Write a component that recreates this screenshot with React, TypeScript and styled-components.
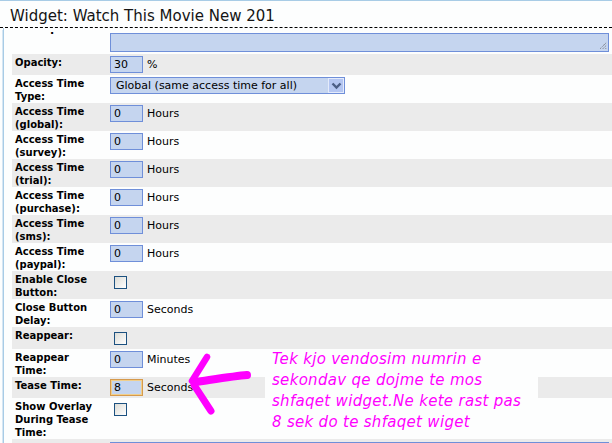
import React from 'react';
import styled, { createGlobalStyle } from 'styled-components';

const GlobalStyle = createGlobalStyle`
  html, body {
    margin: 0;
    padding: 0;
    height: 443px;
    overflow: hidden;
    background: #fdfefe;
  }
  body {
    font-family: "DejaVu Sans", Verdana, sans-serif;
    font-size: 11px;
    color: #000;
  }
`;

type Field = {
  label: string;
  kind: 'input' | 'check' | 'select';
  value?: string;
  unit?: string;
  focused?: boolean;
};

const fields: Field[] = [
  { label: 'Opacity:', kind: 'input', value: '30', unit: '%' },
  { label: 'Access Time Type:', kind: 'select', value: 'Global (same access time for all)' },
  { label: 'Access Time (global):', kind: 'input', value: '0', unit: 'Hours' },
  { label: 'Access Time (survey):', kind: 'input', value: '0', unit: 'Hours' },
  { label: 'Access Time (trial):', kind: 'input', value: '0', unit: 'Hours' },
  { label: 'Access Time (purchase):', kind: 'input', value: '0', unit: 'Hours' },
  { label: 'Access Time (sms):', kind: 'input', value: '0', unit: 'Hours' },
  { label: 'Access Time (paypal):', kind: 'input', value: '0', unit: 'Hours' },
  { label: 'Enable Close Button:', kind: 'check' },
  { label: 'Close Button Delay:', kind: 'input', value: '0', unit: 'Seconds' },
  { label: 'Reappear:', kind: 'check' },
  { label: 'Reappear Time:', kind: 'input', value: '0', unit: 'Minutes' },
  { label: 'Tease Time:', kind: 'input', value: '8', unit: 'Seconds', focused: true },
  { label: 'Show Overlay During Tease Time:', kind: 'check' },
];

const App = () => {
  return (
    <Page>
      <GlobalStyle />
      <Title>Widget: Watch This Movie New 201</Title>
      <Panel>
        <Row $shade={false}>
          <Label>
            <Dot>.</Dot>
          </Label>
          <Value>
            <TextArea>
              <Grip viewBox="0 0 10 10">
                <path d="M9 2 L2 9 M9 5 L5 9 M9 8 L8 9" stroke="#555" strokeWidth="1" strokeDasharray="1 1" />
              </Grip>
            </TextArea>
          </Value>
        </Row>
        {fields.map((f, i) => (
          <Row key={f.label} $shade={i % 2 === 0}>
            <Label>{f.label}</Label>
            <Value>
              {f.kind === 'input' && (
                <>
                  <Input $focused={!!f.focused}>{f.value}</Input>
                  <Unit>{f.unit}</Unit>
                </>
              )}
              {f.kind === 'select' && (
                <Select>
                  <span>{f.value}</span>
                  <SelectButton>
                    <svg width="11" height="8" viewBox="0 0 11 8">
                      <path d="M1.5 1.5 L5.5 5.5 L9.5 1.5" fill="none" stroke="#4a5d86" strokeWidth="2.4" />
                    </svg>
                  </SelectButton>
                </Select>
              )}
              {f.kind === 'check' && <Check />}
            </Value>
          </Row>
        ))}
        <Row $shade={true}>
          <Label>Custom Html:</Label>
          <Value>
            <TextArea />
          </Value>
        </Row>
      </Panel>

      <Arrow viewBox="0 0 80 70" width="80" height="70">
        <g fill="none" stroke="#ff00ff" strokeLinecap="round" strokeWidth="6.5">
          <path d="M67 25 C55 26 36 29 15 32" strokeWidth="8" />
          <path d="M27 7 C22 15 17 23 12 31" />
          <path d="M14 35 C20 44 25 52 31 61" strokeWidth="7" />
        </g>
      </Arrow>

      <Note>
        Tek kjo vendosim numrin e sekondav qe dojme te mos shfaqet widget.Ne kete rast pas 8 sek do te shfaqet wiget
      </Note>
    </Page>
  );
};

export default App;

const Page = styled.div`
  position: relative;
  width: 612px;
  height: 443px;
  border-top: 1px solid #a8cce6;
  box-sizing: border-box;
  overflow: hidden;
`;

const Title = styled.h2`
  margin: 0;
  padding: 6px 0 2px 10px;
  font-size: 15px;
  font-weight: normal;
  line-height: 18px;
  color: #141414;
  border-bottom: 1px dashed #000;
`;

const Panel = styled.div`
  margin-left: 3px;
  padding: 2px 0 0 8px;
  border-left: 1px solid #a8cce6;
  box-shadow: -3px 0 0 -2px #d6e6f3;
`;

const Row = styled.div<{ $shade: boolean }>`
  display: grid;
  grid-template-columns: 98px 1fr;
  background: ${(p) => (p.$shade ? '#ebebeb' : '#fdfefe')};
`;

const Label = styled.div`
  padding: 2px 15px 0 3px;
  font-size: 10px;
  font-weight: bold;
  line-height: 13px;
  color: #000;
`;

const Dot = styled.span`
  display: block;
  padding-left: 35px;
  margin-top: -1px;
  line-height: 0;
  font-size: 11px;
`;

const Value = styled.div`
  display: flex;
  align-items: flex-start;
  padding: 2px 0;
`;

const Input = styled.div<{ $focused: boolean }>`
  box-sizing: border-box;
  width: 33px;
  height: 17px;
  padding: 1px 3px;
  line-height: 13px;
  background: #c5d5ef;
  border: 1px solid ${(p) => (p.$focused ? '#d69a4c' : '#6f8fd9')};
  box-shadow: ${(p) => (p.$focused ? 'inset 0 0 0 1px #f0cf8c' : 'none')};
`;

const Unit = styled.span`
  margin-left: 4px;
  line-height: 17px;
`;

const Select = styled.div`
  box-sizing: border-box;
  width: 235px;
  height: 17px;
  display: flex;
  align-items: center;
  justify-content: space-between;
  padding-left: 5px;
  background: #c5d5ef;
  border: 1px solid #6f8fd9;
  line-height: 13px;
`;

const SelectButton = styled.span`
  box-sizing: border-box;
  width: 16px;
  height: 15px;
  display: flex;
  align-items: center;
  justify-content: center;
  background: #b4c6f2;
  border: 1px solid #e4ebfb;
`;

const Check = styled.span`
  box-sizing: border-box;
  width: 13px;
  height: 13px;
  margin: 3px 0 2px 4px;
  border: 1px solid #1c5180;
  background: linear-gradient(135deg, #dcdcd6, #ffffff);
`;

const TextArea = styled.div`
  position: relative;
  box-sizing: border-box;
  width: calc(100% - 3px);
  height: 19px;
  margin-top: 1px;
  background: #c5d5ef;
  border: 1px solid #6f8fd9;
`;

const Grip = styled.svg`
  position: absolute;
  right: 1px;
  bottom: 1px;
  width: 9px;
  height: 9px;
`;

const Arrow = styled.svg`
  position: absolute;
  left: 180px;
  top: 349px;
`;

const Note = styled.div`
  position: absolute;
  left: 265px;
  top: 348px;
  box-sizing: border-box;
  width: 273px;
  height: 84px;
  padding: 0 6px 0 7px;
  background: #fdfefe;
  color: #ff00ff;
  font-family: "DejaVu Sans", Verdana, sans-serif;
  font-style: italic;
  font-size: 15px;
  letter-spacing: 0.3px;
  line-height: 21px;
`;
